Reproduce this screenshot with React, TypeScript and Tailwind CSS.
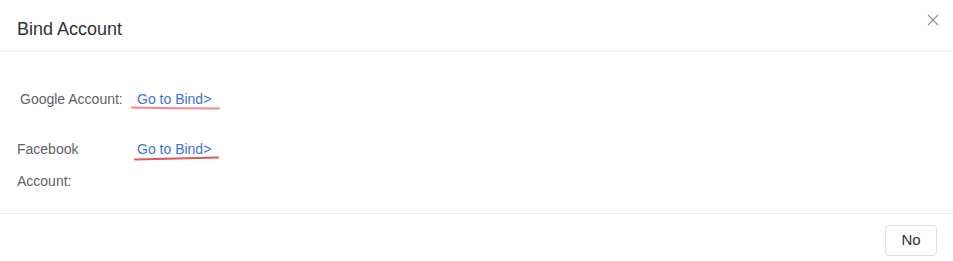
import React from "react";

const Underline: React.FC<{ d: string; stroke: string }> = ({ d, stroke }) => (
  <svg className="absolute left-0 top-0 pointer-events-none" width="953" height="261">
    <path d={d} stroke={stroke} strokeWidth="2" strokeLinecap="round" fill="none" />
  </svg>
);

const App: React.FC = () => {
  return (
    <div className="relative w-[953px] h-[261px] bg-white font-['Liberation_Sans',Arial,sans-serif] overflow-hidden">
      <div className="flex items-center justify-between h-[52px] border-b border-[#ebeef5] pl-[17px] pr-[14px]">
        <h2 className="text-[18px] leading-6 text-[#303133] mt-[6px]">Bind Account</h2>
        <button className="self-start mt-[14px] text-[#909399]">
          <svg width="12" height="12" viewBox="0 0 12 12">
            <path d="M1 1L11 11M11 1L1 11" stroke="#909399" strokeWidth="1.2" />
          </svg>
        </button>
      </div>

      <div className="flex flex-col gap-[18px] pt-[31px] pb-[15px] h-[161px] pl-[17px] text-[14px] text-[#606266]">
        <div className="flex leading-8">
          <span className="w-[120px] pl-[3px]">Google Account:</span>
          <a className="text-[#3a73db] cursor-pointer">Go to Bind&gt;</a>
        </div>
        <div className="flex leading-8">
          <span className="w-[74px]">Facebook Account:</span>
          <a className="ml-[46px] text-[#3a73db] cursor-pointer h-8">Go to Bind&gt;</a>
        </div>
      </div>

      <div className="flex justify-end border-t border-[#ebeef5] pt-[11px] pr-[16px]">
        <button className="h-[31px] w-[52px] rounded-[4px] border border-[#dcdfe6] text-[15px] text-[#303133]">
          No
        </button>
      </div>

      <Underline d="M132 107.5 Q175 108.5 219 108.5" stroke="#f28a8a" />
      <Underline d="M135 159.5 Q177 158.5 218 157.5" stroke="#e0555f" />
    </div>
  );
};

export default App;
